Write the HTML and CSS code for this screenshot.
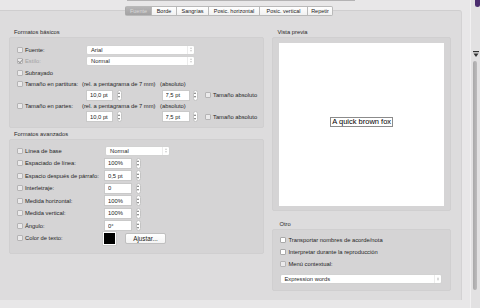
FILE: index.html
```html
<!DOCTYPE html>
<html lang="es">
<head>
    <meta charset="UTF-8">
    <meta name="viewport" content="width=device-width, initial-scale=1.0">
    <title>Propiedades de texto</title>
    <link rel="stylesheet" href="styles.css">
</head>
<body>
    <div class="window">
        <div class="main">
            <div class="topline"></div>
            <div class="tabs">
                <span class="tab active">Fuente</span>
                <span class="tab">Borde</span>
                <span class="tab">Sangrías</span>
                <span class="tab">Posic. horizontal</span>
                <span class="tab">Posic. vertical</span>
                <span class="tab">Repetir</span>
            </div>

            <div class="tabview">
                <!-- Left column -->
                <div class="col col-left">
                    <div class="group-title">Formatos básicos</div>
                    <div class="group basic">
                        <div class="row r-11">
                            <label class="check w-69"><span class="box"></span>Fuente:</label>
                            <div class="popup w-109">Arial<span class="arrows"></span></div>
                        </div>
                        <div class="row r-11">
                            <label class="check w-69 disabled"><span class="box checked"></span>Estilo:</label>
                            <div class="popup w-109">Normal<span class="arrows"></span></div>
                        </div>
                        <div class="row r-13">
                            <label class="check"><span class="box"></span>Subrayado</label>
                        </div>
                        <div class="row r-10">
                            <label class="check w-65"><span class="box"></span>Tamaño en partitura:</label>
                            <span class="note w-78">(rel. a pentagrama de 7 mm)</span>
                            <span class="note">(absoluto)</span>
                        </div>
                        <div class="row r-12 sizes">
                            <input class="field w-27" value="10,0 pt"><span class="stepper"></span>
                            <input class="field w-28 gap-40" value="7,5 pt"><span class="stepper"></span>
                            <label class="check gap-7"><span class="box"></span>Tamaño absoluto</label>
                        </div>
                        <div class="row r-10">
                            <label class="check w-65"><span class="box"></span>Tamaño en partes:</label>
                            <span class="note w-78">(rel. a pentagrama de 7 mm)</span>
                            <span class="note">(absoluto)</span>
                        </div>
                        <div class="row r-11 sizes">
                            <input class="field w-27" value="10,0 pt"><span class="stepper"></span>
                            <input class="field w-28 gap-40" value="7,5 pt"><span class="stepper"></span>
                            <label class="check gap-7"><span class="box"></span>Tamaño absoluto</label>
                        </div>
                    </div>

                    <div class="group-title second">Formatos avanzados</div>
                    <div class="group advanced">
                        <div class="row r-125">
                            <label class="check w-88"><span class="box"></span>Línea de base</label>
                            <div class="popup w-65">Normal<span class="arrows"></span></div>
                        </div>
                        <div class="row r-125">
                            <label class="check w-87"><span class="box"></span>Espaciado de línea:</label>
                            <input class="field w-28" value="100%"><span class="stepper"></span>
                        </div>
                        <div class="row r-125">
                            <label class="check w-87"><span class="box"></span>Espacio después de párrafo:</label>
                            <input class="field w-28" value="0,5 pt"><span class="stepper"></span>
                        </div>
                        <div class="row r-125">
                            <label class="check w-87"><span class="box"></span>Interletraje:</label>
                            <input class="field w-28" value="0"><span class="stepper"></span>
                        </div>
                        <div class="row r-125">
                            <label class="check w-87"><span class="box"></span>Medida horizontal:</label>
                            <input class="field w-28" value="100%"><span class="stepper"></span>
                        </div>
                        <div class="row r-125">
                            <label class="check w-87"><span class="box"></span>Medida vertical:</label>
                            <input class="field w-28" value="100%"><span class="stepper"></span>
                        </div>
                        <div class="row r-125">
                            <label class="check w-87"><span class="box"></span>Ángulo:</label>
                            <input class="field w-28" value="0°"><span class="stepper"></span>
                        </div>
                        <div class="row r-125">
                            <label class="check w-86"><span class="box"></span>Color de texto:</label>
                            <span class="swatch"></span>
                            <button class="btn">Ajustar...</button>
                        </div>
                    </div>
                </div>

                <!-- Right column -->
                <div class="col col-right">
                    <div class="group-title">Vista previa</div>
                    <div class="group preview">
                        <div class="canvas">
                            <span class="sample">A quick brown fox</span>
                        </div>
                    </div>

                    <div class="group-title other-title">Otro</div>
                    <div class="group other">
                        <div class="row r-12">
                            <label class="check"><span class="box light"></span>Transportar nombres de acorde/nota</label>
                        </div>
                        <div class="row r-12">
                            <label class="check"><span class="box light"></span>Interpretar durante la reproducción</label>
                        </div>
                        <div class="row r-12">
                            <label class="check"><span class="box"></span>Menú contextual:</label>
                        </div>
                        <div class="popup w-162 wide">Expression words<span class="arrows"></span></div>
                    </div>
                </div>
            </div>
        </div>

        <div class="scroll">
            <span class="dot"></span>
            <svg class="filter" width="6" height="8" viewBox="0 0 6 8">
                <rect x="0" y="0" width="6" height="1.2" fill="#333"/>
                <path d="M0.5 2.5 H5.5 L3 6 Z" fill="#333"/>
            </svg>
            <span class="track"></span>
        </div>
    </div>
</body>
</html>
```

FILE: styles.css
```css
* {
    margin: 0;
    padding: 0;
    box-sizing: border-box;
}

body {
    width: 480px;
    height: 308px;
    overflow: hidden;
    background: #e8e7e8;
    font-family: 'Liberation Sans', Arial, sans-serif;
    font-size: 5.8px;
    color: #1f1f1f;
}

.window {
    display: flex;
    height: 308px;
}

.main {
    width: 470px;
}

.topline {
    margin-left: 127px;
    width: 228px;
    height: 1px;
    background: #b4b3b4;
}

/* Tabs */
.tabs {
    position: relative;
    z-index: 1;
    display: flex;
    margin: 5px 0 0 125px;
    height: 10px;
}

.tab {
    display: flex;
    align-items: center;
    justify-content: center;
    flex-shrink: 0;
    height: 10px;
    padding: 0 1px;
    white-space: nowrap;
    background: linear-gradient(#ffffff, #f1f1f1);
    border: 1px solid #b9b9b9;
    border-left: none;
    color: #222;
    font-size: 5.5px;
}

.tab:last-child {
    border-radius: 0 2px 2px 0;
}

.tab.active {
    width: 27px;
    border-left: 1px solid #a9a9a9;
    border-radius: 2px 0 0 2px;
    background: linear-gradient(#b6b5b6, #a3a2a3);
    color: #d8d8d8;
}

.tab:nth-child(2) { width: 25px; }
.tab:nth-child(3) { width: 32px; }
.tab:nth-child(4) { width: 51px; }
.tab:nth-child(5) { width: 48px; }
.tab:nth-child(6) { width: 25px; }

.tabview {
    display: flex;
    gap: 8px;
    margin-top: -6px;
    width: 462px;
    height: 290px;
    padding: 18px 10px 0 9px;
    background: #dddcdd;
    border-top: 1px solid #cfcecf;
    border-right: 1px solid #d3d2d3;
    border-radius: 0 3px 0 0;
}

.col-left {
    width: 256px;
}

.col-right {
    width: 179px;
}

.group-title {
    height: 7px;
    line-height: 7px;
    margin: 0 0 1px 5px;
    color: #2a2a2a;
}

.group-title.second {
    margin-top: 3px;
}

.group-title.other-title {
    margin-top: 10px;
    margin-left: 7px;
}

.group {
    background: #d5d4d5;
    border: 1px solid #d0cfd0;
    border-radius: 2px;
}

.basic {
    height: 91px;
    padding: 6px 0 0 7px;
}

.advanced {
    height: 115px;
    padding: 4.5px 0 0 7px;
}

.preview {
    height: 174px;
    padding: 5px 6px 4px 6px;
}

.other {
    height: 62px;
    padding: 3.5px 0 0 7px;
}

/* Rows */
.row {
    display: flex;
    align-items: center;
}

.r-10 { height: 10px; }
.r-11 { height: 11px; }
.r-12 { height: 12px; }
.r-13 { height: 13px; }
.r-125 { height: 12.5px; }

.sizes {
    padding-left: 69px;
}

.check {
    display: flex;
    align-items: center;
    gap: 2px;
    white-space: nowrap;
}

.check.disabled {
    color: #a2a2a2;
}

.box {
    width: 6px;
    height: 6px;
    background: #ebeaeb;
    border: 1px solid #b5b4b5;
    border-radius: 1px;
    flex-shrink: 0;
}

.box.light {
    background: #ffffff;
    border-color: #a9a9a9;
}

.box.checked {
    position: relative;
}

.box.checked::after {
    content: '';
    position: absolute;
    left: 1px;
    top: -1px;
    width: 2px;
    height: 4px;
    border: solid #9a9a9a;
    border-width: 0 1px 1px 0;
    transform: rotate(40deg);
}

.w-65 { width: 65px; }
.w-69 { width: 69px; }
.w-78 { width: 78px; }
.w-86 { width: 86px; }
.w-87 { width: 87px; }
.w-88 { width: 88px; }

.note {
    white-space: nowrap;
}

/* Controls */
.popup {
    position: relative;
    height: 10px;
    line-height: 9px;
    padding-left: 4px;
    background: #ffffff;
    border: 1px solid #d2d2d2;
    border-radius: 2px;
    font-size: 5.8px;
}

.popup.w-109 { width: 109px; }
.popup.w-65 { width: 65px; }
.popup.w-162 { width: 162px; }

.popup.wide {
    margin-top: 4.5px;
    line-height: 8px;
    height: 9.5px;
    padding-left: 3px;
}

.arrows {
    position: absolute;
    right: 0;
    top: 0;
    bottom: 0;
    width: 7px;
    border-left: 1px solid #ececec;
}

.arrows::before,
.arrows::after,
.stepper::before,
.stepper::after {
    content: '';
    position: absolute;
    left: 50%;
    margin-left: -1.5px;
    border-left: 1.5px solid transparent;
    border-right: 1.5px solid transparent;
}

.arrows::before {
    top: 1.5px;
    border-bottom: 2px solid #cdcdcd;
}

.arrows::after {
    bottom: 1.5px;
    border-top: 2px solid #cdcdcd;
}

.field {
    height: 11px;
    padding: 0 3px;
    background: #ffffff;
    border: 1px solid #c9c9c9;
    font-family: inherit;
    font-size: 5.8px;
    color: #222;
    outline: none;
}

.w-27 { width: 27px; }
.w-28 { width: 28px; }

.gap-40 { margin-left: 40px; }
.gap-7 { margin-left: 7px; }

.stepper {
    position: relative;
    flex-shrink: 0;
    width: 5px;
    height: 11px;
    margin-left: 3.5px;
    background: #ffffff;
    border: 1px solid #c3c3c3;
    border-radius: 2.5px;
}

.stepper::before {
    top: 1.5px;
    border-bottom: 2px solid #707070;
}

.stepper::after {
    bottom: 1.5px;
    border-top: 2px solid #707070;
}

.swatch {
    width: 13px;
    height: 13px;
    background: #000000;
    border: 1px solid #ffffff;
    box-shadow: 0 0 0 0.5px #bdbdbd;
}

.btn {
    margin-left: 9px;
    width: 41px;
    height: 11px;
    background: linear-gradient(#ffffff, #f4f4f4);
    border: 1px solid #c0c0c0;
    border-radius: 2px;
    font-family: inherit;
    font-size: 6.3px;
    color: #1a1a1a;
}

/* Preview */
.canvas {
    display: flex;
    align-items: center;
    justify-content: center;
    height: 100%;
    background: #ffffff;
}

.sample {
    margin-bottom: 6px;
    padding: 0 1px;
    border: 1px solid #8b8b8b;
    font-size: 7.5px;
    line-height: 8px;
    color: #000;
}

/* Right edge */
.scroll {
    position: relative;
    width: 10px;
    border-left: 1px solid #f1f0f1;
    background: #e2e1e2;
}

.dot {
    position: absolute;
    left: 4px;
    top: 0;
    width: 5px;
    height: 7px;
    border-radius: 0 0 3px 3px;
    background: #4b2d6e;
}

.filter {
    position: absolute;
    left: 2px;
    top: 51px;
}

.track {
    position: absolute;
    left: 2px;
    top: 61px;
    width: 4px;
    height: 229px;
    border-radius: 2px;
    background: linear-gradient(90deg, #a9a8a9, #bcbbbc);
}
```
